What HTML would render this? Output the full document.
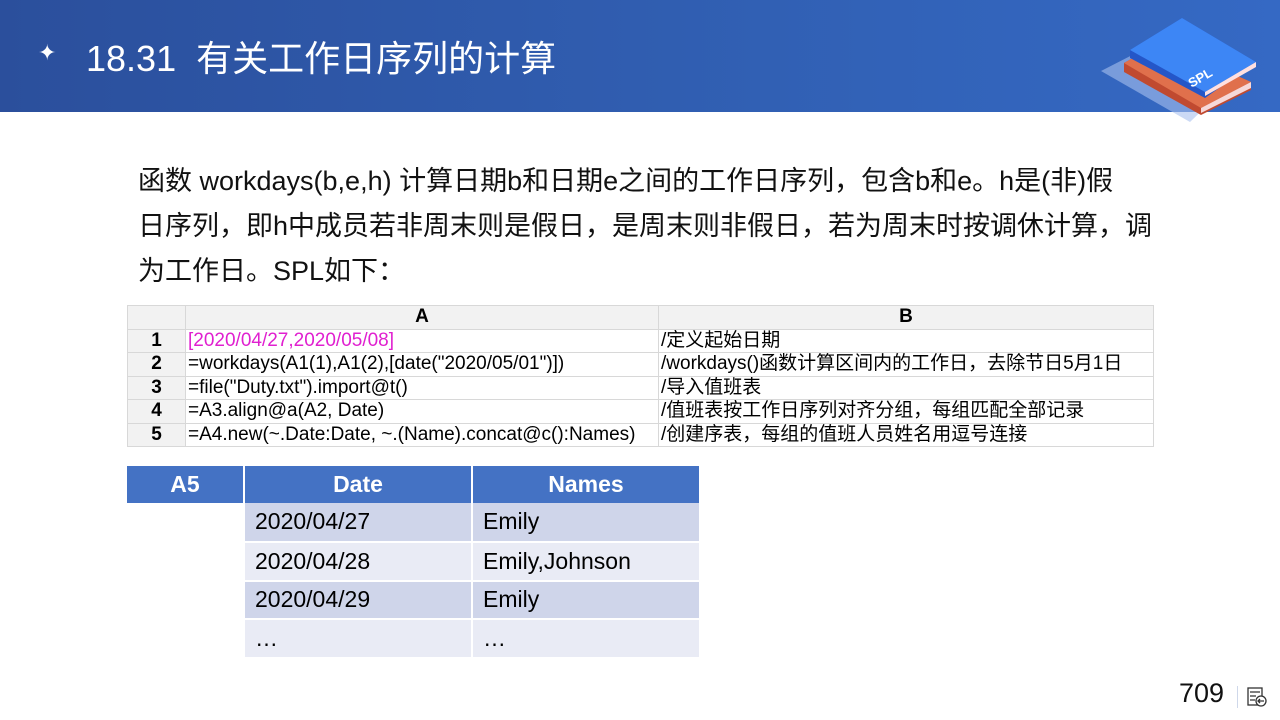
<!DOCTYPE html>
<html><head><meta charset="utf-8"><style>
*{margin:0;padding:0;box-sizing:border-box}
body{width:1280px;height:720px;position:relative;background:#fff;font-family:"Liberation Sans","Noto Sans CJK SC",sans-serif;overflow:hidden}
.hdr{position:absolute;left:0;top:0;width:1280px;height:112px;background:linear-gradient(90deg,#2b4f9c 0%,#3160b4 60%,#3569c4 100%)}
.title{position:absolute;left:86px;top:30px;color:#fff;font-size:36px;white-space:nowrap}
.star{position:absolute;left:38px;top:40px;color:#fff;font-size:22px}
.para{position:absolute;left:138px;top:159px;width:1100px;font-size:27px;line-height:45px;color:#111;white-space:nowrap}
table{border-collapse:collapse;position:absolute}
.code{left:127px;top:305px;font-size:19px;table-layout:fixed;width:1026px}
.code td{border:1px solid #d8d8d8;height:23.5px;padding:0 2px;white-space:nowrap;line-height:22px;overflow:hidden}
.code td.b{font-size:19px}
.code .h{background:#f2f2f2;font-weight:bold;text-align:center;font-size:19px}
.res{left:127px;top:466px;font-size:23px}
.res td{height:38.8px;padding:0 10px;border:1px solid #fff;border-width:0 2px 2px 0}
.res th{background:#4472c4;color:#fff;font-weight:bold;height:37px;border-right:2px solid #fff;font-size:23px}
.r1 td.c{background:#cfd5ea}.r2 td.c{background:#e9ebf5}
.pg{position:absolute;left:1179px;top:678px;font-size:27px;color:#111}
</style></head><body>
<div class="hdr"></div>
<div class="star">✦</div>
<div class="title">18.31&nbsp; 有关工作日序列的计算</div>
<svg style="position:absolute;left:0;top:0" width="1280" height="125" viewBox="0 0 1280 125">
<polygon points="1101,71 1150,46 1218,95 1190,122" fill="#a8bfee" opacity=".6"/>
<polygon points="1124,63 1161,42 1251,82 1251,90 1201,115 1124,72" fill="#c04a30"/>
<polygon points="1124,63 1161,42 1251,82 1201,108" fill="#e0704c"/>
<polygon points="1201,108 1251,82 1251,88 1201,113" fill="#f6d8d8"/>
<polygon points="1130,50 1182,18 1256,62 1205,98 1130,58" fill="#2456c8"/>
<polygon points="1130,50 1182,18 1256,62 1205,92" fill="#3d86f5"/>
<polygon points="1205,92 1256,62 1256,67 1205,96" fill="#ffe0e0"/>
<text x="1188" y="85" fill="#fff" font-size="13" font-weight="bold" transform="rotate(-30 1195 80)" font-family="Liberation Sans">SPL</text>
</svg>
<div class="para">函数 workdays(b,e,h) 计算日期b和日期e之间的工作日序列，包含b和e。h是(非)假<br>日序列，即h中成员若非周末则是假日，是周末则非假日，若为周末时按调休计算，调<br>为工作日。SPL如下：</div>
<table class="code">
<colgroup><col style="width:58px"><col style="width:473px"><col style="width:495px"></colgroup>
<tr><td class="h"></td><td class="h">A</td><td class="h">B</td></tr>
<tr><td class="h">1</td><td style="color:#e020d0">[2020/04/27,2020/05/08]</td><td class="b">/定义起始日期</td></tr>
<tr><td class="h">2</td><td>=workdays(A1(1),A1(2),[date("2020/05/01")])</td><td class="b">/workdays()函数计算区间内的工作日，去除节日5月1日</td></tr>
<tr><td class="h">3</td><td>=file("Duty.txt").import@t()</td><td class="b">/导入值班表</td></tr>
<tr><td class="h">4</td><td>=A3.align@a(A2, Date)</td><td class="b">/值班表按工作日序列对齐分组，每组匹配全部记录</td></tr>
<tr><td class="h">5</td><td>=A4.new(~.Date:Date, ~.(Name).concat@c():Names)</td><td class="b">/创建序表，每组的值班人员姓名用逗号连接</td></tr>
</table>
<table class="res">
<tr><th style="width:117px">A5</th><th style="width:228px">Date</th><th style="width:228px">Names</th></tr>
<tr class="r1"><td></td><td class="c">2020/04/27</td><td class="c">Emily</td></tr>
<tr class="r2"><td></td><td class="c">2020/04/28</td><td class="c">Emily,Johnson</td></tr>
<tr class="r1"><td></td><td class="c">2020/04/29</td><td class="c">Emily</td></tr>
<tr class="r2"><td></td><td class="c">…</td><td class="c">…</td></tr>
</table>
<div class="pg">709</div>
<div style="position:absolute;left:1237px;top:686px;width:1px;height:22px;background:#cfd8ea"></div>
<svg style="position:absolute;left:1246px;top:686px" width="22" height="22" viewBox="0 0 22 22" fill="none" stroke="#333" stroke-width="1.3"><rect x="2" y="2" width="14" height="17"/><path d="M4 6h10M4 10h6M4 14h5"/><circle cx="15" cy="15" r="5" fill="#fff"/><path d="M18 15h-6M14 13l-2 2 2 2"/></svg>
</body></html>
